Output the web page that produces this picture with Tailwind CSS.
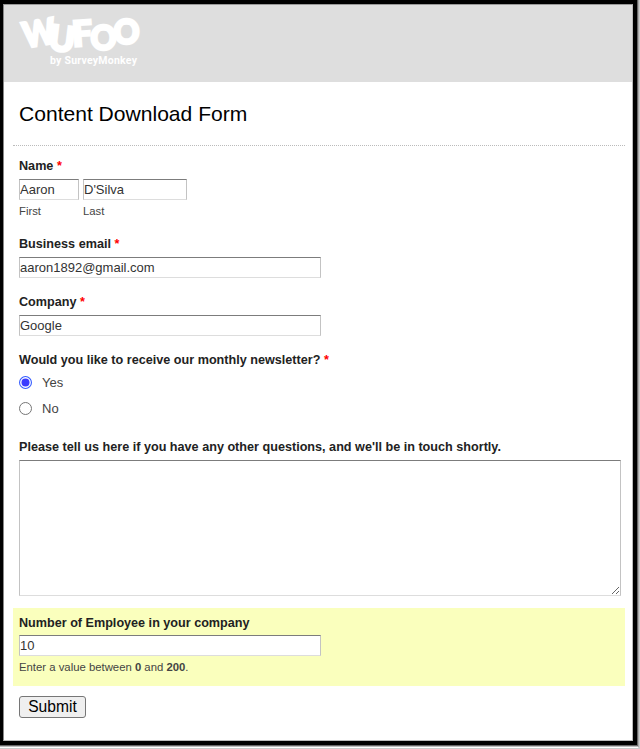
<!DOCTYPE html>
<html lang="en">
<head>
<meta charset="utf-8">
<title>Content Download Form</title>
<script src="https://cdn.jsdelivr.net/npm/@tailwindcss/browser@4"></script>
</head>
<body class="w-[640px] h-[749px] overflow-hidden bg-[#ccc] font-['Liberation_Sans',Arial,sans-serif] text-[#444]">
<div class="w-[639px] h-[748px] border-r border-b border-r-[#aaa] border-b-white">
<div class="w-[638px] h-[747px] border-b border-[#bbb]">
<div class="w-[638px] h-[746px] bg-black border-r border-b border-[#666] pt-1 pl-[3px] pr-[4px] pb-[4px]">
<main class="w-[630px] h-[737px] bg-white border border-t-[#999] border-l-[#888] border-r-[#bbb] border-b-[#bbb] flex flex-col">
  <header class="h-[77px] shrink-0 bg-[#dedede]">
    <svg width="150" height="77" viewBox="4 5 150 77" fill="#fff" font-family="Lato, sans-serif" role="img" aria-label="Wufoo by SurveyMonkey">
      <g font-size="35" font-weight="900" stroke="#fff" stroke-width="2.6" stroke-linejoin="miter">
        <text transform="translate(25 48) rotate(-10)" textLength="33" lengthAdjust="spacingAndGlyphs">W</text>
        <text transform="translate(47.500 49.500) rotate(7)" textLength="26" lengthAdjust="spacingAndGlyphs">U</text>
        <text transform="translate(73 46.500) rotate(-4)" textLength="20" lengthAdjust="spacingAndGlyphs">F</text>
        <text transform="translate(90.500 49.500)" textLength="26" lengthAdjust="spacingAndGlyphs">O</text>
        <text transform="translate(113.500 43.500)" textLength="26" lengthAdjust="spacingAndGlyphs">O</text>
      </g>
      <text x="50" y="64" font-size="10.500" font-weight="700" font-family="Roboto, sans-serif" textLength="87" lengthAdjust="spacing">by SurveyMonkey</text>
    </svg>
  </header>
  <form class="flex flex-col px-[9px]">
    <h1 class="h-[64px] mr-[-2px] pt-[19px] pl-[6px] text-[21.07px] leading-[26px] text-black border-b border-dotted border-[#bbb]">Content Download Form</h1>
    <section class="h-[78px] pl-[6px] pt-[12px]">
      <label class="block h-[21px] text-[12.64px] leading-[17px] font-bold text-[#222]">Name <span class="text-[#f00]">*</span></label>
      <div class="flex gap-1">
        <div><input class="block w-[60px] h-[21px] border border-t-[#7c7c7c] border-x-[#c3c3c3] border-b-[#ddd] text-[13px] text-[#333]" value="Aaron"><span class="block pt-[4px] text-[11.3px] leading-[15px]">First</span></div>
        <div><input class="block w-[104px] h-[21px] border border-t-[#7c7c7c] border-x-[#c3c3c3] border-b-[#ddd] text-[13px] text-[#333]" value="D'Silva"><span class="block pt-[4px] text-[11.3px] leading-[15px]">Last</span></div>
      </div>
    </section>
    <section class="h-[58px] pl-[6px] pt-[12px]">
      <label class="block h-[21px] text-[12.64px] leading-[17px] font-bold text-[#222]">Business email <span class="text-[#f00]">*</span></label>
      <input class="block w-[302px] h-[21px] border border-t-[#7c7c7c] border-x-[#c3c3c3] border-b-[#ddd] text-[13px] text-[#333]" value="aaron1892@gmail.com">
    </section>
    <section class="h-[58px] pl-[6px] pt-[12px]">
      <label class="block h-[21px] text-[12.64px] leading-[17px] font-bold text-[#222]">Company <span class="text-[#f00]">*</span></label>
      <input class="block w-[302px] h-[21px] border border-t-[#7c7c7c] border-x-[#c3c3c3] border-b-[#ddd] text-[13px] text-[#333]" value="Google">
    </section>
    <section class="h-[87px] pl-[6px] pt-[12px]">
      <label class="block h-[21px] text-[12.64px] leading-[17px] font-bold text-[#222]">Would you like to receive our monthly newsletter? <span class="text-[#f00]">*</span></label>
      <div class="flex items-start gap-[10px] h-[20px] text-[13px] leading-[20px]"><svg class="mt-[3px]" width="13" height="13" viewBox="0 0 13 13"><circle cx="6.5" cy="6.5" r="5.95" fill="#fff" stroke="#345cff" stroke-width="1.1"/><circle cx="6.500" cy="6.500" r="4" fill="#3b3bff"/></svg>Yes</div>
      <div class="mt-[6px] flex items-start gap-[10px] h-[20px] text-[13px] leading-[20px]"><svg class="mt-[3px]" width="13" height="13" viewBox="0 0 13 13"><circle cx="6.5" cy="6.5" r="6" fill="#fff" stroke="#767676"/></svg>No</div>
    </section>
    <section class="h-[181px] pl-[6px] pt-[12px]">
      <label class="block h-[21px] text-[12.64px] leading-[17px] font-bold text-[#222]">Please tell us here if you have any other questions, and we'll be in touch shortly.</label>
      <textarea class="block resize w-[602px] h-[136px] border border-t-[#7c7c7c] border-x-[#c3c3c3] border-b-[#ddd]"></textarea>
    </section>
    <section class="w-[612px] h-[78px] pl-[6px] pt-[7px] bg-[#faffbd]">
      <label class="block h-[20px] text-[12.62px] leading-[17px] font-bold text-[#222]">Number of Employee in your company</label>
      <input class="block w-[302px] h-[21px] bg-white border border-t-[#7c7c7c] border-x-[#c3c3c3] border-b-[#ddd] text-[13px] text-[#333]" value="10">
      <p class="pt-[4px] text-[11.33px] leading-[15px]">Enter a value between <b>0</b> and <b>200</b>.</p>
    </section>
    <button type="button" class="mt-[10px] ml-[6px] w-[67px] h-[22px] rounded-[3px] border border-[#767676] bg-[#efefef] text-[15.6px] leading-[20px] text-black">Submit</button>
  </form>
</main>
</div>
</div>
</div>
</body>
</html>
